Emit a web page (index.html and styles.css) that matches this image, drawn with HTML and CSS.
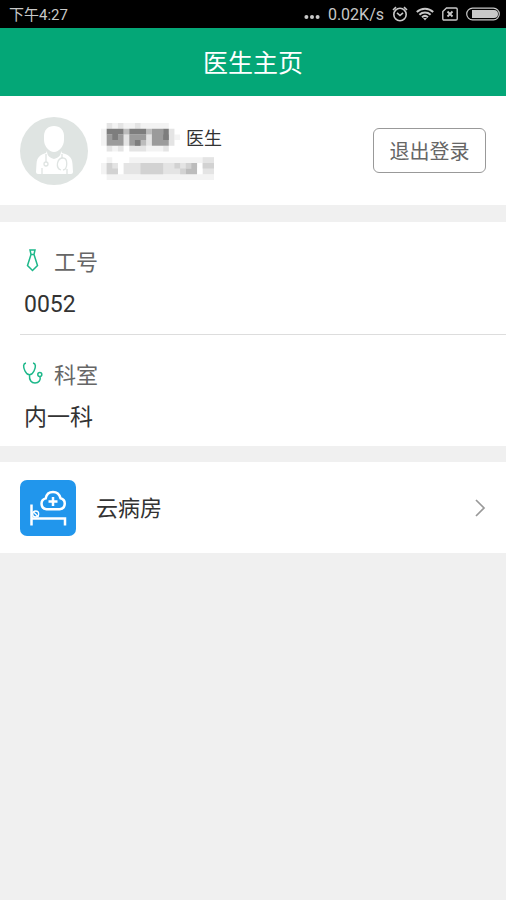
FILE: index.html
```html
<!DOCTYPE html>
<html lang="zh-CN">
<head>
<meta charset="utf-8">
<meta name="viewport" content="width=device-width, initial-scale=1">
<title>医生主页</title>
<link rel="stylesheet" href="styles.css">
</head>
<body>
<div class="status">
  <span class="time">下午4:27</span>
  <svg width="16" height="12" viewBox="0 0 16 12" fill="currentColor"><circle cx="2.4" cy="9" r="2"/><circle cx="8" cy="9" r="2"/><circle cx="13.6" cy="9" r="2"/></svg>
  <span class="speed">0.02K/s</span>
  <svg width="16" height="16" viewBox="0 0 16 16" fill="none" stroke="currentColor" stroke-width="1.6"><circle cx="8" cy="8.5" r="6.2"/><path d="M5 6.8l3 2.7 3-2.7M1 4l3-2.8M15 4l-3-2.8"/></svg>
  <svg width="18" height="14" viewBox="0 0 18 14" fill="none" stroke="currentColor" stroke-width="2"><path d="M.8 5a12 12 0 0 1 16.4 0M3.4 7.7a8.3 8.3 0 0 1 11.2 0M6 10.200a4.500 4.500 0 0 1 6 0"/><path d="M7 11l2 2.500 2-2.500z" fill="currentColor" stroke="none"/></svg>
  <svg width="16" height="14" viewBox="0 0 16 14" fill="none" stroke="currentColor" stroke-width="1.4"><path d="M4.500 1H14q1.200 0 1.200 1.200v9.600Q15.200 13 14 13H2Q.8 13 .8 11.800V4.500z"/><path d="M5.500 4.500l5 5M10.500 4.500l-5 5" stroke-width="1.800"/></svg>
  <svg width="34" height="14" viewBox="0 0 34 14"><rect x=".7" y="1.200" width="32.600" height="11.600" rx="5.800" fill="none" stroke="currentColor" stroke-width="1.200"/><path d="M6 3h22a4 4 0 0 1 0 8H6z" fill="currentColor"/></svg>
</div>
<header class="title-bar"><h1>医生主页</h1></header>
<main>
  <section class="profile">
    <svg class="avatar" viewBox="0 0 68 68" role="img" aria-label="头像">
      <circle cx="34" cy="34" r="34" fill="#dfe4e2"/>
      <path d="M34 9c6 0 10 4 10 10v4c0 6-5 12-10 12s-10-6-10-12v-4c0-6 4-10 10-10z" fill="#fff"/>
      <path d="M27 34c0 5 3 7 7 8 4-1 7-3 7-8l1 2c7 2 10 4 10.500 11l.5 8q0 2-2 2H18q-2 0-2-2l.5-8C17 40 20 38 26 36z" fill="#fff"/>
      <g fill="none" stroke="#dfe4e2" stroke-width="1.300"><path d="M26 37v8M42 37v5M41 53c-6-2-4-12 2-12 5 0 5 11 0 12M22 51v6M47 52v5"/><circle cx="26" cy="47" r="2"/></g>
    </svg>
    <div class="identity">
      <svg class="mosaic" viewBox="0 0 20 10" preserveAspectRatio="none" aria-hidden="true">
        <g fill="#f3f3f3"><path d="M0 1h1v3H0zM2 0h1v1H2zM4 0h5v1H4zM9 0h3v1H9zM2 4h1v1H2zM8 4h3v1H8zM13 2h1v1h-1zM0 7h1v2H0zM1 6h1v1H1zM5 6h15v1H5zM1 9h19v1H1z"/></g>
        <g fill="#e4e4e4"><path d="M1 0h1v1H1zM3 0h1v1H3zM6 0h1v1H6zM1 4h1v1H1zM3 4h1v1H3zM5 4h3v1H5zM11 4h1v1h-1zM12 1h1v3h-1zM4 2h1v2H4zM8 2h1v2H8zM1 7h2v2H1zM4 7h11v2H4zM15 7h2v1h-2zM18 6h2v3h-2z"/></g>
        <g fill="#d2d2d2"><path d="M1 7h1v2H1zM2 8h1v1H2zM7 7h4v2H7zM13 7h1v1h-1zM14 8h1v1h-1zM15 7h2v1h-2zM18 7h2v1h-2z"/></g>
        <g fill="#bcbcbc"><path d="M4 1h1v1H4zM7 3h1v1H7zM8 1h1v1H8zM15 8h2v1h-2zM16 7h1v1h-1z"/></g>
        <g fill="#9b9b9b"><path d="M1 2h3v2H1zM5 2h2v2H5zM7 2h1v1H7zM9 1h2v3H9zM11 2h1v2h-1z"/></g>
        <g fill="#7d7d7d"><path d="M1 1h3v1H1zM5 1h3v1H5zM2 2h1v1H2zM6 3h1v1H6zM11 1h1v2h-1z"/></g>
      </svg>
      <span class="role">医生</span>
    </div>
    <button class="logout" type="button">退出登录</button>
  </section>
  <dl class="details">
    <div class="item">
      <dt><svg width="24" height="24" viewBox="0 0 24 24" fill="none" stroke="#1db88a" stroke-width="1.500"><path d="M10 2h5l-1 4.500h-3zM11 6.500L7.500 17.500l5 5 5-5L14 6.500"/></svg>工号</dt>
      <dd>0052</dd>
    </div>
    <div class="item">
      <dt><svg width="24" height="24" viewBox="0 0 24 24" fill="none" stroke="#1db88a" stroke-width="1.500"><path d="M6 2C3 2.500 3 6 5 10c2.500 5 6.500 5 9 0 2-4 2-7.500-1-8M9.500 13.500c-.5 6 2 8.500 5.500 8.500 4 0 6-3 5-6.500"/><circle cx="19.800" cy="13.500" r="2"/></svg>科室</dt>
      <dd>内一科</dd>
    </div>
  </dl>
  <a class="ward" href="#ward">
    <svg class="ward-icon" viewBox="0 0 56 56" aria-hidden="true">
      <rect width="56" height="56" rx="7" fill="#2196ec"/>
      <g fill="none" stroke="#fff" stroke-width="2.500"><path d="M11.500 24.500v21M11.500 38.500h33.500v7"/><path d="M26.500 29.200a5.500 5.500 0 0 1-.8-10.800C26.500 14 29.500 12 33 12c4 0 6.500 2.500 7.500 6.200a5.600 5.600 0 0 1-.8 11z"/><path d="M33 17v9M28.500 21.500h9"/></g>
      <g fill="none" stroke="#fff" stroke-width="1.300"><circle cx="15.700" cy="34" r="3"/><path d="M13.500 32l5 5"/></g>
    </svg>
    <span class="ward-name">云病房</span>
    <svg class="chevron" width="12" height="20" viewBox="0 0 12 20" fill="none" stroke="#999" stroke-width="1.700" aria-hidden="true"><path d="M2 2l8 8-8 8"/></svg>
  </a>
</main>
</body>
</html>
```
FILE: styles.css
```css
* { box-sizing: border-box; }

body {
  margin: 0;
  background: #f0f0f0;
  color: #333;
  font-family: Roboto, "Noto Sans CJK SC", sans-serif;
}

svg { display: block; flex: none; }

.status {
  display: flex;
  align-items: center;
  gap: 8px;
  height: 28px;
  padding: 0 6px 0 9px;
  background: #000;
  color: #c8c8c8;
  font-size: 16px;
}

.time {
  margin-right: auto;
  padding-bottom: 2px;
  font-size: 15px;
}

.title-bar {
  display: flex;
  align-items: center;
  justify-content: center;
  height: 68px;
  padding-bottom: 2px;
  background: #04a777;
  color: #fff;
}

h1 {
  margin: 0;
  font-size: 25px;
  font-weight: 400;
}

.profile {
  display: flex;
  align-items: center;
  height: 109px;
  padding: 20px;
  background: #fff;
}

.avatar {
  width: 68px;
  height: 68px;
}

.identity {
  display: flex;
  align-items: flex-start;
  margin-left: 13px;
  padding-top: 2px;
}

.mosaic {
  width: 113px;
  height: 57px;
}

.role {
  margin-left: -28px;
  font-size: 18px;
  line-height: 32px;
}

.logout {
  margin-left: auto;
  width: 113px;
  height: 45px;
  padding: 0;
  border: 1px solid #999;
  border-radius: 6px;
  background: #fff;
  color: #666;
  font: inherit;
  font-size: 20px;
}

.details {
  margin: 17px 0 16px;
  padding-left: 20px;
  background: #fff;
}

.item {
  height: 112px;
  padding-top: 22px;
}

.item + .item { border-top: 1px solid #ddd; }

dt {
  display: flex;
  align-items: center;
  gap: 10px;
  height: 32px;
  color: #666;
  font-size: 22px;
}

dd {
  margin: 13px 0 0 4px;
  font-size: 23px;
  line-height: 32px;
}

.ward {
  display: flex;
  align-items: center;
  gap: 20px;
  height: 91px;
  padding: 0 20px;
  background: #fff;
  color: #333;
  font-size: 22px;
  text-decoration: none;
}

.ward-icon {
  width: 56px;
  height: 56px;
}

.ward-name { padding-bottom: 4px; }

.chevron { margin-left: auto; }
```
